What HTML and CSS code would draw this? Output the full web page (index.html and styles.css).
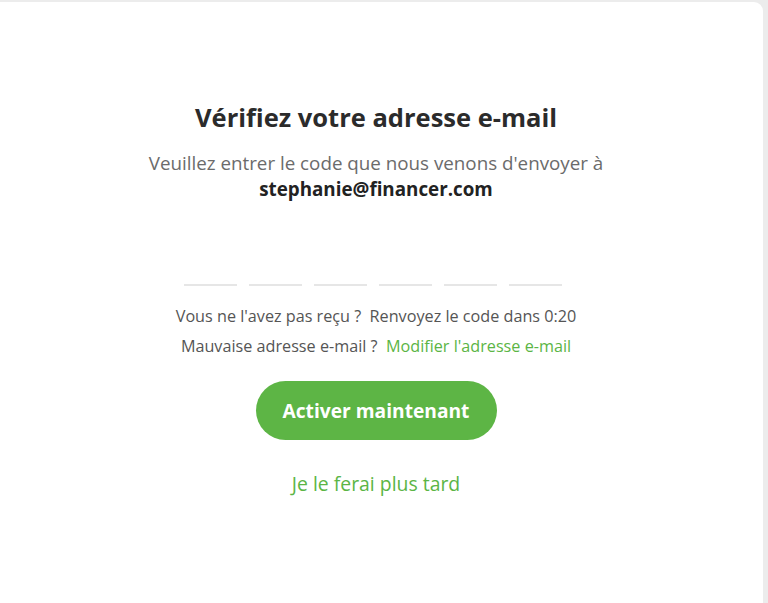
FILE: index.html
```html
<!DOCTYPE html>
<html lang="fr">
<head>
<meta charset="utf-8">
<title>Vérifiez votre adresse e-mail</title>
<link rel="stylesheet" href="styles.css">
</head>
<body>
<main class="card">
  <section class="content">
    <h1 class="title">Vérifiez votre adresse e-mail</h1>
    <p class="subtitle">Veuillez entrer le code que nous venons d'envoyer à</p>
    <p class="email">stephanie@financer.com</p>
    <div class="code">
      <span class="digit"></span>
      <span class="digit"></span>
      <span class="digit"></span>
      <span class="digit"></span>
      <span class="digit"></span>
      <span class="digit"></span>
    </div>
    <p class="info">Vous ne l'avez pas reçu ?&nbsp; Renvoyez le code dans 0:20</p>
    <p class="info">Mauvaise adresse e-mail ?&nbsp; <a class="link" href="#">Modifier l'adresse e-mail</a></p>
    <button class="btn" type="button">Activer maintenant</button>
    <a class="later" href="#">Je le ferai plus tard</a>
  </section>
</main>
</body>
</html>
```
FILE: styles.css
```css
html, body {
  margin: 0;
  padding: 0;
}
body {
  background: #ececec;
  font-family: "Open Sans", "Noto Sans", sans-serif;
  height: 603px;
  overflow: hidden;
}
.card {
  margin-top: 2px;
  width: 763px;
  height: 601px;
  background: #fff;
  border-top-right-radius: 9px;
}
.content {
  display: flex;
  flex-direction: column;
  align-items: center;
  padding-top: 97px;
  padding-right: 11px;
}
.title {
  margin: 0;
  font-size: 25.5px;
  line-height: 36px;
  font-weight: 700;
  color: #2b2b2b;
}
.subtitle {
  margin: 15px 0 0;
  font-size: 18.8px;
  line-height: 26px;
  color: #6b6b6b;
  white-space: nowrap;
}
.email {
  margin: 0;
  font-size: 18.8px;
  line-height: 26px;
  font-weight: 700;
  color: #222;
}
.code {
  display: flex;
  gap: 12px;
  margin: 82px 6px 0 0;
}
.digit {
  width: 53px;
  height: 2px;
  background: #e6e6e6;
}
.info {
  margin: 19px 0 0;
  font-size: 16.2px;
  line-height: 22px;
  color: #555;
  white-space: nowrap;
}
.info + .info {
  margin-top: 8px;
}
.link {
  color: #5bb545;
  text-decoration: none;
}
.btn {
  margin-top: 24px;
  width: 241px;
  height: 59px;
  border: none;
  border-radius: 30px;
  background: #5db545;
  color: #fff;
  font-family: inherit;
  font-size: 19.2px;
  font-weight: 700;
}
.later {
  margin-top: 31px;
  font-size: 19.4px;
  line-height: 26px;
  color: #5bb545;
  text-decoration: none;
}
```
